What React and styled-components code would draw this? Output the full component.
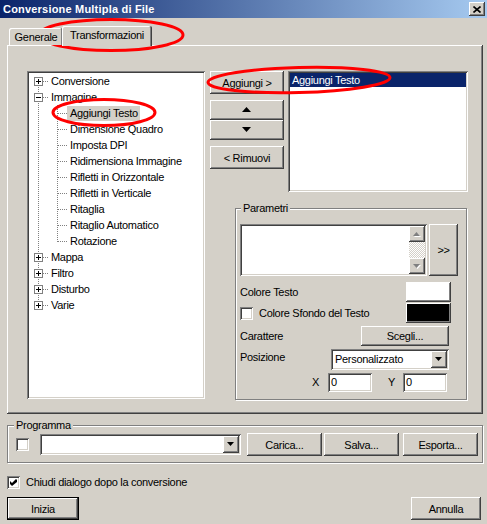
import React from "react";
import styled, { createGlobalStyle, css } from "styled-components";

const GlobalStyle = createGlobalStyle`
  * { box-sizing: border-box; }
  html, body { margin: 0; padding: 0; background: #d4d0c8; }
  body {
    font-family: "Liberation Sans", Arial, sans-serif;
    font-size: 11px;
    letter-spacing: -0.3px;
    color: #000;
  }
  button { font: inherit; color: inherit; letter-spacing: inherit; }
`;

const raised = css`
  background: #d4d0c8;
  box-shadow: inset -1px -1px #404040, inset 1px 1px #ffffff,
    inset -2px -2px #808080, inset 2px 2px #d4d0c8;
`;

const sunken = css`
  background: #ffffff;
  box-shadow: inset 1px 1px #808080, inset -1px -1px #ffffff,
    inset 2px 2px #404040, inset -2px -2px #d4d0c8;
`;

const Window = styled.div`
  position: relative;
  width: 487px;
  height: 524px;
  background: #d4d0c8;
  display: flex;
  flex-direction: column;
`;

const TitleBar = styled.div`
  height: 18px;
  display: flex;
  align-items: center;
  justify-content: space-between;
  padding: 0 2px 0 3px;
  background: linear-gradient(to right, #0a246a, #a6caf0);
  color: #fff;
  font-weight: bold;
  font-size: 11px;
  letter-spacing: 0.2px;
`;

const CloseButton = styled.button`
  ${raised};
  width: 16px;
  height: 14px;
  border: 0;
  padding: 0;
  display: flex;
  align-items: center;
  justify-content: center;
`;

const Body = styled.div`
  display: flex;
  flex-direction: column;
  padding: 0 4px 0 7px;
`;

const TabStrip = styled.div`
  position: relative;
  z-index: 1;
  display: flex;
  align-items: flex-end;
  height: 27px;
  padding-left: 2px;
`;

const Tab = styled.div`
  display: flex;
  align-items: center;
  justify-content: center;
  width: ${(p) => p.$w}px;
  height: ${(p) => (p.$active ? 20 : 17)}px;
  margin-bottom: ${(p) => (p.$active ? -1 : 0)}px;
  margin-left: ${(p) => (p.$active ? -1 : 0)}px;
  padding-bottom: ${(p) => (p.$active ? 2 : 0)}px;
  background: #d4d0c8;
  border-radius: 2px 2px 0 0;
  box-shadow: inset -1px 0 #404040, inset 1px 1px #ffffff, inset -2px 0 #808080;
`;

const Panel = styled.div`
  height: 369px;
  display: flex;
  align-items: flex-start;
  gap: 5px;
  padding: 26px 0 0 20px;
  box-shadow: inset -1px -1px #404040, inset 1px 1px #ffffff,
    inset -2px -2px #808080;
`;

const TreeBox = styled.div`
  ${sunken};
  width: 178px;
  height: 328px;
  padding: 2px;
`;

const TreeRow = styled.div`
  display: flex;
  align-items: center;
  height: 16px;
`;

const GutterSvg = styled.svg`
  display: block;
  flex: none;
`;

const TreeLabel = styled.span`
  height: 15px;
  line-height: 15px;
  padding: 0 2px 0 3px;
  white-space: nowrap;
  background: ${(p) => (p.$selected ? "#d4d0c8" : "transparent")};
`;

const RightCol = styled.div`
  display: flex;
  flex-direction: column;
`;

const TopRow = styled.div`
  display: flex;
  align-items: flex-start;
  gap: 4px;
`;

const ButtonCol = styled.div`
  display: flex;
  flex-direction: column;
  width: 74px;
`;

const PushButton = styled.button`
  ${raised};
  border: 0;
  padding: 0;
  flex: none;
  display: flex;
  align-items: center;
  justify-content: center;
  width: ${(p) => (p.$w ? `${p.$w}px` : "100%")};
  height: ${(p) => p.$h || 23}px;
  margin-top: ${(p) => p.$mt || 0}px;
  margin-left: ${(p) => p.$ml || 0}px;
  ${(p) =>
    p.$default &&
    css`
      box-shadow: inset 0 0 0 1px #000000, inset -2px -2px #404040,
        inset 2px 2px #ffffff, inset -3px -3px #808080;
    `}
`;

const ListBox = styled.div`
  ${sunken};
  width: 180px;
  height: 121px;
  padding: 2px;
`;

const ListItem = styled.div`
  height: 14px;
  line-height: 14px;
  padding-left: 2px;
  background: #0a246a;
  color: #fff;
`;

const GroupBox = styled.div`
  display: flex;
  flex-direction: column;
  border: 1px solid #808080;
  box-shadow: inset 1px 1px #ffffff, 1px 1px #ffffff;
  width: ${(p) => (p.$w ? `${p.$w}px` : "auto")};
  height: ${(p) => p.$h}px;
  margin-top: ${(p) => p.$mt || 0}px;
  margin-left: ${(p) => p.$ml || 0}px;
`;

const GroupLegend = styled.div`
  align-self: flex-start;
  margin: -7px 0 0 ${(p) => p.$ml || 5}px;
  padding: 0 2px;
  line-height: 13px;
  background: #d4d0c8;
`;

const GroupBody = styled.div`
  display: flex;
  flex-direction: column;
  padding: ${(p) => p.$pad};
`;

const ParamTop = styled.div`
  display: flex;
  gap: 2px;
`;

const TextArea = styled.div`
  ${sunken};
  width: 187px;
  height: 52px;
  padding: 2px;
  display: flex;
  justify-content: flex-end;
`;

const ScrollBar = styled.div`
  width: 16px;
  display: flex;
  flex-direction: column;
`;

const ScrollArrow = styled.div`
  ${raised};
  height: 16px;
  display: flex;
  align-items: center;
  justify-content: center;
`;

const ScrollTrack = styled.div`
  flex: 1;
  background: repeating-conic-gradient(#ffffff 0 25%, #d4d0c8 0 50%) 0 0 / 2px 2px;
`;

const ParamRow = styled.div`
  display: flex;
  align-items: ${(p) => (p.$top ? "flex-start" : "center")};
  justify-content: ${(p) => p.$justify || "space-between"};
  height: ${(p) => p.$h}px;
  margin-top: ${(p) => p.$mt}px;
  padding-right: ${(p) => p.$pr}px;
`;

const Label = styled.span`
  line-height: 13px;
  white-space: nowrap;
  padding-top: ${(p) => p.$pt || 0}px;
  margin-left: ${(p) => p.$ml || 0}px;
  margin-right: ${(p) => p.$mr || 0}px;
`;

const CheckLabel = styled.label`
  display: flex;
  align-items: center;
  gap: 6px;
`;

const Swatch = styled.div`
  width: 45px;
  height: 20px;
  background: ${(p) => p.$color};
  box-shadow: inset -1px -1px #404040, inset 1px 1px #ffffff,
    inset -2px -2px #808080;
`;

const Combo = styled.div`
  ${sunken};
  width: ${(p) => p.$w}px;
  height: 21px;
  padding: 2px;
  display: flex;
  flex: none;
  margin-left: ${(p) => p.$ml || 0}px;
`;

const ComboText = styled.span`
  flex: 1;
  padding-left: 2px;
  line-height: 17px;
`;

const ComboButton = styled.span`
  ${raised};
  width: 16px;
  display: flex;
  align-items: center;
  justify-content: center;
`;

const TextField = styled.div`
  ${sunken};
  width: 44px;
  height: 19px;
  padding: 0 3px;
  line-height: 19px;
`;

const CheckBox = styled.span`
  ${sunken};
  width: 13px;
  height: 13px;
  flex: none;
  display: flex;
  align-items: center;
  justify-content: center;
`;

const ProgramRow = styled.div`
  display: flex;
  align-items: center;
  height: 23px;
`;

const Footer = styled.div`
  display: flex;
  justify-content: space-between;
  margin-top: 8px;
  padding-right: 2px;
`;

const CloseRow = styled.div`
  margin-top: 13px;
  height: 13px;
  display: flex;
`;

const Annotations = styled.svg`
  position: absolute;
  left: 0;
  top: 0;
  pointer-events: none;
`;

const Triangle = ({ dir = "up", w = 7, h = 4, fill = "#000", embossed }) => {
  const pts =
    dir === "up" ? `0,${h} ${w / 2},0 ${w},${h}` : `0,0 ${w},0 ${w / 2},${h}`;
  return (
    <svg width={w + 1} height={h + 1} style={{ display: "block" }}>
      {embossed && <polygon points={pts} fill="#fff" transform="translate(1,1)" />}
      <polygon points={pts} fill={fill} />
    </svg>
  );
};

const CheckMark = () => (
  <svg width="7" height="7" style={{ display: "block" }}>
    <path d="M0 2 L2 4 L6 0 L7 1 L7 3 L2 7 L0 5 Z" fill="#000" />
  </svg>
);

const dot = { stroke: "#808080", strokeDasharray: "1 1", shapeRendering: "crispEdges" };

// one indent cell of the tree: vertical run, branch and optional +/- box
const Gutter = ({ v, branch, toggle }) => {
  const y1 = v === "bottom" ? 8 : 0;
  const y2 = v === "top" ? 9 : 16;
  return (
    <GutterSvg width="19" height="16">
      {v && <line x1="9.5" x2="9.5" y1={y1} y2={y2} {...dot} />}
      {branch && <line x1="10" x2="19" y1="8.5" y2="8.5" {...dot} />}
      {toggle && (
        <g shapeRendering="crispEdges">
          <rect x="5.5" y="4.5" width="8" height="8" fill="#fff" stroke="#808080" />
          <line x1="7" x2="12" y1="8.5" y2="8.5" stroke="#000" />
          {toggle === "+" && <line x1="9.5" x2="9.5" y1="6" y2="11" stroke="#000" />}
        </g>
      )}
    </GutterSvg>
  );
};

const tree = [
  { label: "Conversione", toggle: "+", v: "bottom" },
  { label: "Immagine", toggle: "-" },
  { label: "Aggiungi Testo", child: true, selected: true },
  { label: "Dimensione Quadro", child: true },
  { label: "Imposta DPI", child: true },
  { label: "Ridimensiona Immagine", child: true },
  { label: "Rifletti in Orizzontale", child: true },
  { label: "Rifletti in Verticale", child: true },
  { label: "Ritaglia", child: true },
  { label: "Ritaglio Automatico", child: true },
  { label: "Rotazione", child: true, last: true },
  { label: "Mappa", toggle: "+" },
  { label: "Filtro", toggle: "+" },
  { label: "Disturbo", toggle: "+" },
  { label: "Varie", toggle: "+", v: "top" },
];

const Tree = () => (
  <TreeBox>
    {tree.map((item) => (
      <TreeRow key={item.label}>
        {item.child ? (
          <>
            <Gutter v="full" />
            <Gutter v={item.last ? "top" : "full"} branch />
          </>
        ) : (
          <Gutter v={item.v || "full"} branch toggle={item.toggle} />
        )}
        <TreeLabel $selected={item.selected}>{item.label}</TreeLabel>
      </TreeRow>
    ))}
  </TreeBox>
);

const Parametri = () => (
  <GroupBox $w={232} $h={192} $mt={16} $ml={25}>
    <GroupLegend $ml={5}>Parametri</GroupLegend>
    <GroupBody $pad="9px 7px 0 4px">
      <ParamTop>
        <TextArea>
          <ScrollBar>
            <ScrollArrow>
              <Triangle dir="up" fill="#808080" embossed />
            </ScrollArrow>
            <ScrollTrack />
            <ScrollArrow>
              <Triangle dir="down" fill="#808080" embossed />
            </ScrollArrow>
          </ScrollBar>
        </TextArea>
        <PushButton $w={29} $h={52}>&gt;&gt;</PushButton>
      </ParamTop>
      <ParamRow $mt={6} $h={20} $pr={8}>
        <Label>Colore Testo</Label>
        <Swatch $color="#ffffff" />
      </ParamRow>
      <ParamRow $mt={1} $h={20} $pr={8}>
        <CheckLabel>
          <CheckBox />
          <Label>Colore Sfondo del Testo</Label>
        </CheckLabel>
        <Swatch $color="#000000" />
      </ParamRow>
      <ParamRow $mt={3} $h={20} $pr={10}>
        <Label>Carattere</Label>
        <PushButton $w={88} $h={20}>Scegli...</PushButton>
      </ParamRow>
      <ParamRow $mt={3} $h={21} $pr={10} $top>
        <Label $pt={2}>Posizione</Label>
        <Combo $w={118}>
          <ComboText>Personalizzato</ComboText>
          <ComboButton>
            <Triangle dir="down" />
          </ComboButton>
        </Combo>
      </ParamRow>
      <ParamRow $mt={3} $h={19} $pr={12} $justify="flex-end">
        <Label $mr={9}>X</Label>
        <TextField>0</TextField>
        <Label $ml={16} $mr={8}>Y</Label>
        <TextField>0</TextField>
      </ParamRow>
    </GroupBody>
  </GroupBox>
);

export default function App() {
  return (
    <>
      <GlobalStyle />
      <Window>
        <TitleBar>
          <span>Conversione Multipla di File</span>
          <CloseButton aria-label="Chiudi">
            <svg width="8" height="7" style={{ display: "block" }}>
              <path d="M0.5 0.5 L7.5 6.5 M7.5 0.5 L0.5 6.5" stroke="#000" strokeWidth="1.6" />
            </svg>
          </CloseButton>
        </TitleBar>
        <Body>
          <TabStrip>
            <Tab $w={54}>Generale</Tab>
            <Tab $w={90} $active>
              Transformazioni
            </Tab>
          </TabStrip>
          <Panel>
            <Tree />
            <RightCol>
              <TopRow>
                <ButtonCol>
                  <PushButton>Aggiungi &gt;</PushButton>
                  <PushButton $h={20} $mt={6}>
                    <Triangle dir="up" w={9} h={5} />
                  </PushButton>
                  <PushButton $h={20}>
                    <Triangle dir="down" w={9} h={5} />
                  </PushButton>
                  <PushButton $mt={6}>&lt; Rimuovi</PushButton>
                </ButtonCol>
                <ListBox>
                  <ListItem>Aggiungi Testo</ListItem>
                </ListBox>
              </TopRow>
              <Parametri />
            </RightCol>
          </Panel>
          <GroupBox $h={38} $mt={11}>
            <GroupLegend $ml={6}>Programma</GroupLegend>
            <GroupBody $pad="1px 0 0 8px">
              <ProgramRow>
                <CheckBox />
                <Combo $w={201} $ml={11}>
                  <ComboText />
                  <ComboButton>
                    <Triangle dir="down" />
                  </ComboButton>
                </Combo>
                <PushButton $w={75} $ml={6}>Carica...</PushButton>
                <PushButton $w={75} $ml={2}>Salva...</PushButton>
                <PushButton $w={75} $ml={4}>Esporta...</PushButton>
              </ProgramRow>
            </GroupBody>
          </GroupBox>
          <CloseRow>
            <CheckLabel>
              <CheckBox>
                <CheckMark />
              </CheckBox>
              <Label>Chiudi dialogo dopo la conversione</Label>
            </CheckLabel>
          </CloseRow>
          <Footer>
            <PushButton $w={72} $default>Inizia</PushButton>
            <PushButton $w={70}>Annulla</PushButton>
          </Footer>
        </Body>
        <Annotations width="487" height="524">
          <g fill="none" stroke="#ff0000" strokeWidth="3">
            <ellipse cx="111" cy="35" rx="72" ry="15.5" />
            <ellipse cx="104" cy="112.5" rx="51" ry="13" />
            <ellipse cx="299" cy="80" rx="91" ry="12.5" transform="rotate(-1.5 299 80)" />
          </g>
        </Annotations>
      </Window>
    </>
  );
}
